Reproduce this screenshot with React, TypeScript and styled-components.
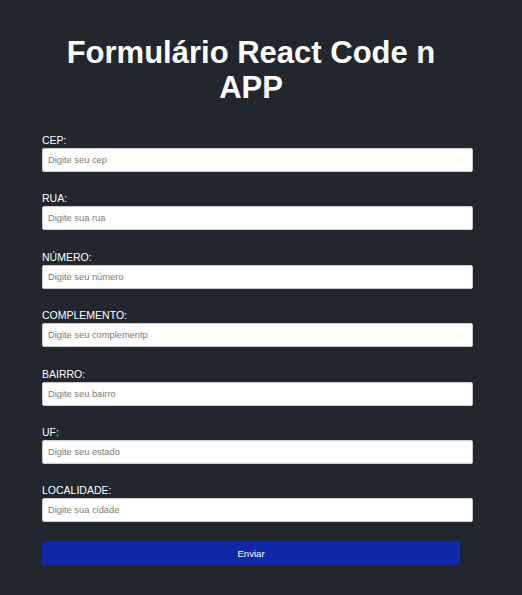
import * as React from 'react';
import styled, { createGlobalStyle } from 'styled-components';

const GlobalStyle = createGlobalStyle`
    html, body {
        margin: 0;
        padding: 0;
        background-color: #22262e;
    }
    body {
        font-family: "Liberation Sans", Arial, sans-serif;
        min-height: 595px;
    }
`;

const Container = styled.div`
    width: 418px;
    margin-left: 42px;
    padding-top: 35px;
`;

const Title = styled.h1`
    margin: 0 0 29px;
    color: #ffffff;
    font-size: 31px;
    line-height: 35px;
    font-weight: bold;
    text-align: center;
`;

const Form = styled.form`
    display: flex;
    flex-direction: column;
    gap: 20.4px;
`;

const Field = styled.div`
    display: flex;
    flex-direction: column;
    gap: 1px;
`;

const Label = styled.label`
    color: #ffffff;
    font-size: 10.5px;
    line-height: 13px;
`;

const Input = styled.input`
    box-sizing: border-box;
    width: 431px;
    height: 24px;
    margin: 0;
    padding: 0 5px;
    border: 1px solid #c9c9c9;
    border-radius: 2px;
    background: #ffffff;
    font-family: "Liberation Sans", Arial, sans-serif;
    font-size: 9.3px;
    color: #333;
    outline: none;
    &::placeholder{
        color: #7b7b7b;
    }
`;

const Button = styled.button`
    width: 418px;
    height: 25px;
    margin-top: -1.5px;
    border: none;
    border-radius: 3px;
    background-color: #0e28a8;
    color: #ffffff;
    font-family: "Liberation Sans", Arial, sans-serif;
    font-size: 9.6px;
    cursor: pointer;
`;

const fields = [
    { label: 'CEP:', placeholder: 'Digite seu cep' },
    { label: 'RUA:', placeholder: 'Digite sua rua' },
    { label: 'NÚMERO:', placeholder: 'Digite seu número' },
    { label: 'COMPLEMENTO:', placeholder: 'Digite seu complementp' },
    { label: 'BAIRRO:', placeholder: 'Digite seu bairro' },
    { label: 'UF:', placeholder: 'Digite seu estado' },
    { label: 'LOCALIDADE:', placeholder: 'Digite sua cidade' },
];

const App = () => {
    return (
        <>
            <GlobalStyle />
            <Container>
                <Title>Formulário React Code n APP</Title>
                <Form onSubmit={e => e.preventDefault()}>
                    {fields.map(f => (
                        <Field key={f.label}>
                            <Label>{f.label}</Label>
                            <Input type='text' placeholder={f.placeholder} />
                        </Field>
                    ))}
                    <Button type='submit'>Enviar</Button>
                </Form>
            </Container>
        </>
    )
}

export default App;
